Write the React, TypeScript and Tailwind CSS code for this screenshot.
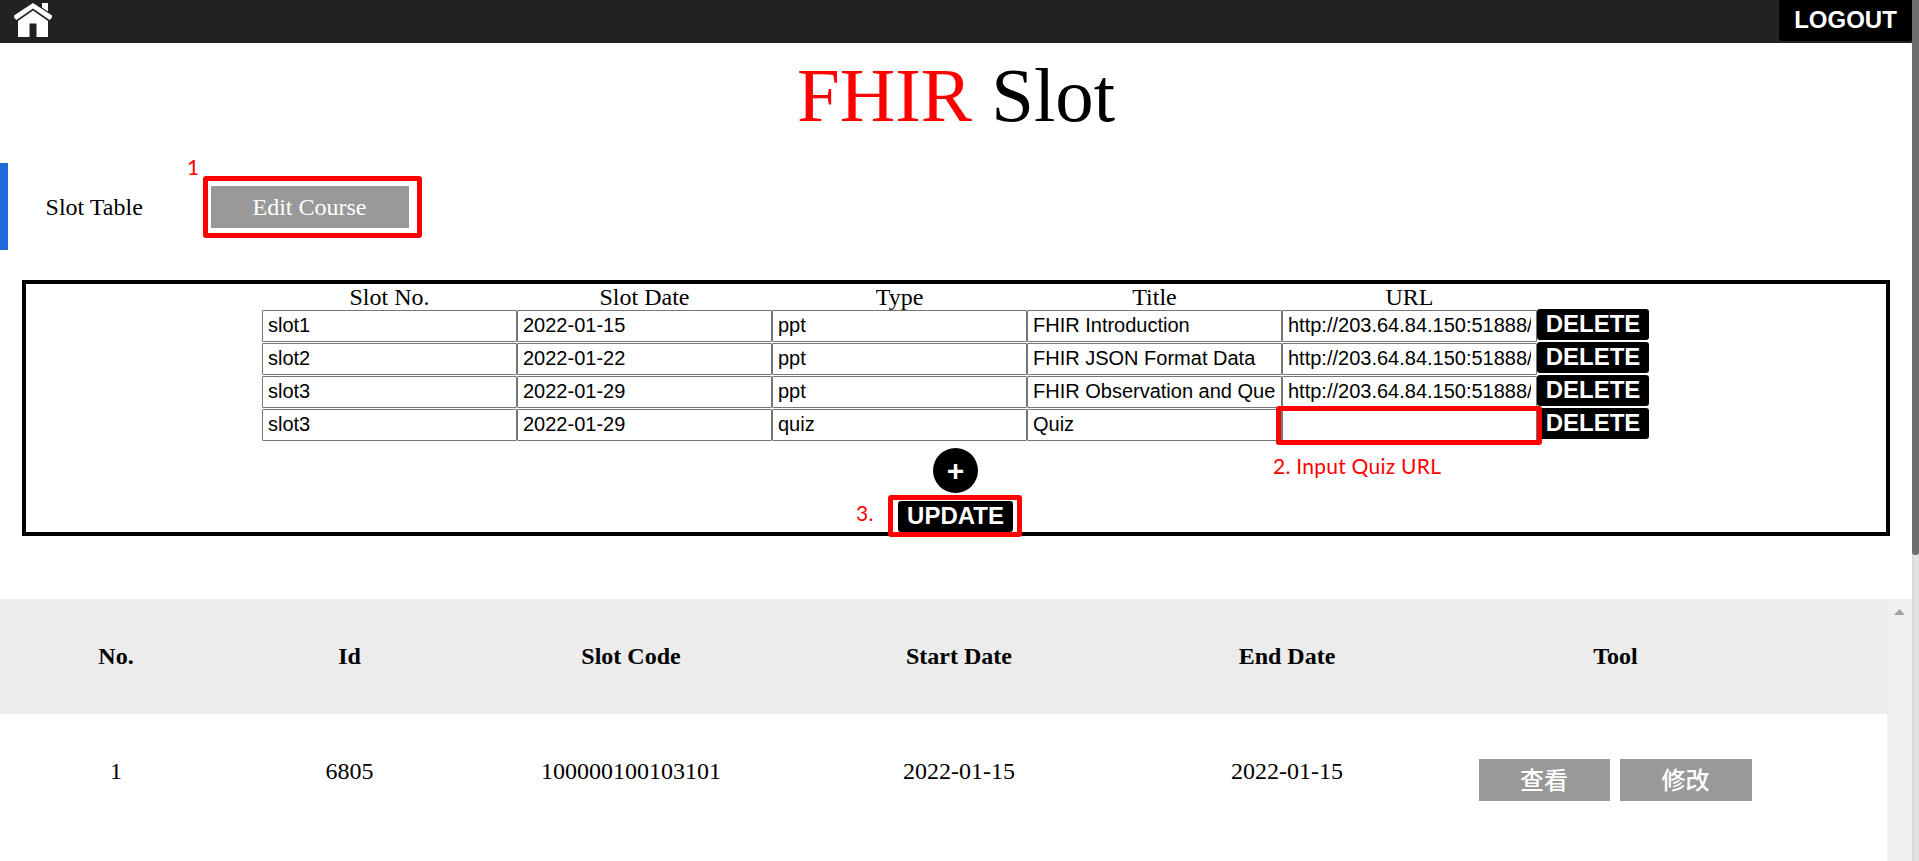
import React from "react";

const slots = [
  ["slot1", "2022-01-15", "ppt", "FHIR Introduction", "http://203.64.84.150:51888/"],
  ["slot2", "2022-01-22", "ppt", "FHIR JSON Format Data", "http://203.64.84.150:51888/"],
  ["slot3", "2022-01-29", "ppt", "FHIR Observation and Que", "http://203.64.84.150:51888/"],
  ["slot3", "2022-01-29", "quiz", "Quiz", ""],
];

const columns = ["Slot No.", "Slot Date", "Type", "Title", "URL"];

function HomeIcon() {
  return (
    <svg className="h-[34px] w-[38px]" viewBox="0 0 38 34" fill="#fff">
      <path d="M28 0h6v8.500L28 4.600z" />
      <path d="M19 0 38 12.600V14.500L35.600 17 19 5.400 2.400 17 0 14.500V12.600z" />
      <path d="M19 7.600 34 18v16H22.500V20.500H15.500V34H4V18z" />
    </svg>
  );
}

function Highlight({ className }: { className: string }) {
  return <span className={`pointer-events-none absolute rounded-[3px] border-5 border-[#ff0000] ${className}`} />;
}

function Note({ className, children }: { className: string; children: React.ReactNode }) {
  return (
    <span className={`absolute font-['Lato',sans-serif] text-[21px] leading-6 tracking-[0.25px] whitespace-nowrap text-[#ff0000] ${className}`}>
      {children}
    </span>
  );
}

function BlackButton({ className, children }: { className: string; children: React.ReactNode }) {
  return (
    <button
      className={`flex shrink-0 items-center justify-center bg-black font-['Liberation_Sans',Arial,sans-serif] text-2xl leading-none font-bold text-white ${className}`}
    >
      {children}
    </button>
  );
}

function TopBar() {
  return (
    <header className="flex h-[43px] justify-between bg-[#222222]">
      <a className="pt-[3px] pl-[14px]">
        <HomeIcon />
      </a>
      <BlackButton className="h-[41px] w-[133px] rounded-b-[3px] pb-px">LOGOUT</BlackButton>
    </header>
  );
}

function SlotEditor() {
  return (
    <section className="relative mt-[30px] mr-[22px] ml-[22px] flex h-64 flex-col items-center border-4 border-black pr-px">
      <div className="flex h-[26px] w-[1387px] text-center text-2xl leading-[26px]">
        {columns.map((c) => (
          <div key={c} className="w-[255px]">{c}</div>
        ))}
      </div>
      <div className="w-[1387px]">
        {slots.map((row, i) => (
          <div key={i} className="flex h-[33px] items-start">
            {row.map((value, j) => (
              <input
                key={j}
                readOnly
                value={value}
                className="h-8 w-[255px] shrink-0 rounded-[1px] border border-[#767676] bg-white px-[5px] pt-px pb-[2px] font-['Liberation_Sans',Arial,sans-serif] text-xl leading-none text-black outline-none"
              />
            ))}
            <BlackButton className="-mt-px h-[31px] w-28 rounded-[3px] pb-[2px]">DELETE</BlackButton>
          </div>
        ))}
      </div>
      <BlackButton className="mt-[6px] h-[45px] w-[45px] rounded-full">
        <span className="text-[30px]">+</span>
      </BlackButton>
      <BlackButton className="mt-2 h-[31px] w-[115px] rounded-[3px] pb-[2px]">UPDATE</BlackButton>
      <Highlight className="top-[122px] left-[1250px] h-[39px] w-[266px]" />
      <Highlight className="top-[211px] left-[862px] h-[42px] w-[134px]" />
      <Note className="top-[170px] left-[1247px]">2. Input Quiz URL</Note>
      <Note className="top-[217px] left-[830px]">3.</Note>
    </section>
  );
}

function SlotTable() {
  return (
    <section className="mt-[63px] flex h-[262px]">
      <div className="w-[1887px] text-2xl">
        <div className="flex h-[115px] items-center bg-[#ececec] pb-[2px] text-center font-bold">
          <div className="w-[232px]">No.</div>
          <div className="w-[235px]">Id</div>
          <div className="w-[328px]">Slot Code</div>
          <div className="w-[328px]">Start Date</div>
          <div className="w-[328px]">End Date</div>
          <div className="w-[329px]">Tool</div>
        </div>
        <div className="flex h-[115px] items-center pb-[2px] text-center">
          <div className="w-[232px]">1</div>
          <div className="w-[235px]">6805</div>
          <div className="w-[328px]">100000100103101</div>
          <div className="w-[328px]">2022-01-15</div>
          <div className="w-[328px]">2022-01-15</div>
          <div className="flex w-[329px] justify-center gap-[10px] pt-[18px] font-['Noto_Sans_CJK_TC',sans-serif] leading-none font-medium text-white">
            <button className="h-[42px] w-[131px] bg-[#999999] pr-px pb-[2px]">查看</button>
            <button className="h-[42px] w-[132px] bg-[#999999] pr-px pb-[2px]">修改</button>
          </div>
        </div>
      </div>
      <div className="flex w-[25px] justify-center bg-[#f0f0f0] pt-[10px]">
        <svg className="h-[6px] w-[11px]" viewBox="0 0 11 6" fill="#a3a3a3">
          <path d="M5.500 0 11 6H0z" />
        </svg>
      </div>
    </section>
  );
}

export default function App() {
  return (
    <div className="flex h-[861px] w-[1919px] overflow-hidden bg-white font-['Liberation_Serif','Times_New_Roman',serif] text-black">
      <main className="w-[1912px] shrink-0">
        <TopBar />
        <h1 className="flex h-[120px] justify-center pt-[9px] text-[76.8px] leading-[88px] whitespace-pre">
          <span className="text-[#ff0000]">FHIR</span> Slot
        </h1>
        <div className="relative flex h-[87px] items-center border-l-8 border-[#1e6bd9]">
          <div className="w-[203px] pl-[37.6px] text-2xl">Slot Table</div>
          <button className="mt-px h-[42px] w-[198px] bg-[#999999] pr-px text-2xl leading-none text-white">Edit Course</button>
          <Highlight className="top-[13px] left-[195px] h-[62px] w-[219px]" />
          <Note className="-top-[8px] left-[179px]">1</Note>
        </div>
        <SlotEditor />
        <SlotTable />
      </main>
      <aside className="w-[7px] bg-linear-to-r from-[#d6d6d6] via-[#e3e3e3] to-[#dfdfdf]">
        <div className="h-[555px] rounded-b-[3px] bg-[#6e6e6d]" />
      </aside>
    </div>
  );
}
